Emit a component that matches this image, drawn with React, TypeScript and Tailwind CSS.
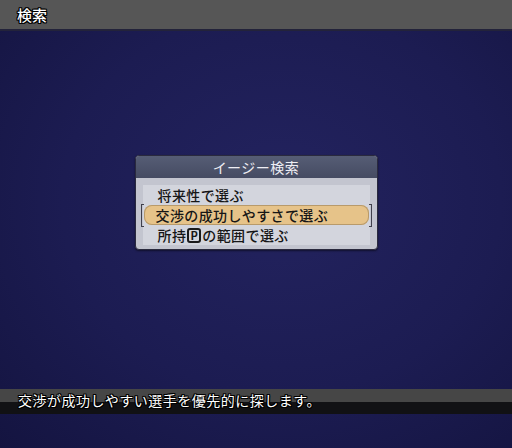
const jp = "font-['Noto_Sans_CJK_JP','Noto_Sans',sans-serif]"
const outline = '[text-shadow:-1px_0_0_#000,1px_0_0_#000,0_-1px_0_#000,0_1px_0_#000,1px_1px_0_#000,-1px_-1px_0_#000,1px_-1px_0_#000,-1px_1px_0_#000]'

function PMark() {
  return (
    <span className="mx-[1px] inline-flex h-[15px] w-[14px] items-center justify-center rounded-[3px] border-2 border-[#1a1a1a] text-[11px] font-bold leading-none">
      P
    </span>
  )
}

function MenuRow({ children, active }: { children: React.ReactNode; active?: boolean }) {
  if (!active) {
    return (
      <div className="flex h-[20px] items-center pl-[15px] text-[14px] font-medium leading-none tracking-[0.4px] text-[#161616]">
        {children}
      </div>
    )
  }
  return (
    <div className="-mx-[2px] flex h-[20px] items-center">
      <span className="h-[23px] w-[3px] shrink-0 border-y border-l border-[#40404c]" />
      <div className="flex h-[20px] flex-1 items-center rounded-[8px] bg-[#e6c389] pl-[12px] text-[14px] font-medium leading-none tracking-[0.4px] text-[#161616] shadow-[inset_0_0_0_1px_#b89a6a]">
        {children}
      </div>
      <span className="h-[23px] w-[3px] shrink-0 border-y border-r border-[#40404c]" />
    </div>
  )
}

export default function App() {
  return (
    <div className={`flex h-[448px] w-[512px] flex-col overflow-hidden bg-[radial-gradient(ellipse_at_55%_45%,#23235f_0%,#1c1c52_55%,#141440_100%)] ${jp}`}>
      {/* title bar */}
      <div className="flex h-[29px] items-center bg-[#565656] pl-[17px]">
        <span className={`text-[15px] font-medium leading-none text-white ${outline}`}>検索</span>
      </div>
      <div className="h-[2px] bg-[#23233a]" />

      {/* main */}
      <div className="flex flex-1 justify-center pt-[124px]">
        <div className="h-[95px] w-[243px] rounded-[4px] border border-[#2a2a3e] bg-[#c3c5cf] shadow-[0_1px_2px_rgba(0,0,0,0.5)]">
          <div className="flex h-[22px] items-center justify-center rounded-t-[3px] bg-[linear-gradient(#565d75,#454b62)] text-[14px] leading-none tracking-[0.5px] text-[#eeeef4]">
            イージー検索
          </div>
          <div className="mx-[7px] mt-[7px] flex flex-col bg-[#d3d5dd]">
            <MenuRow>将来性で選ぶ</MenuRow>
            <MenuRow active>交渉の成功しやすさで選ぶ</MenuRow>
            <MenuRow>
              所持<PMark />の範囲で選ぶ
            </MenuRow>
          </div>
        </div>
      </div>

      {/* help bar */}
      <div className="flex h-[25px] flex-col">
        <div className="relative flex h-[13px] bg-[#464646]">
          <span className={`absolute left-[18px] top-[4px] text-[14px] leading-none tracking-[0.5px] text-white ${outline}`}>
            交渉が成功しやすい選手を優先的に探します。
          </span>
        </div>
        <div className="h-[12px] bg-[#111114]" />
      </div>
      <div className="h-[34px]" />
    </div>
  )
}
